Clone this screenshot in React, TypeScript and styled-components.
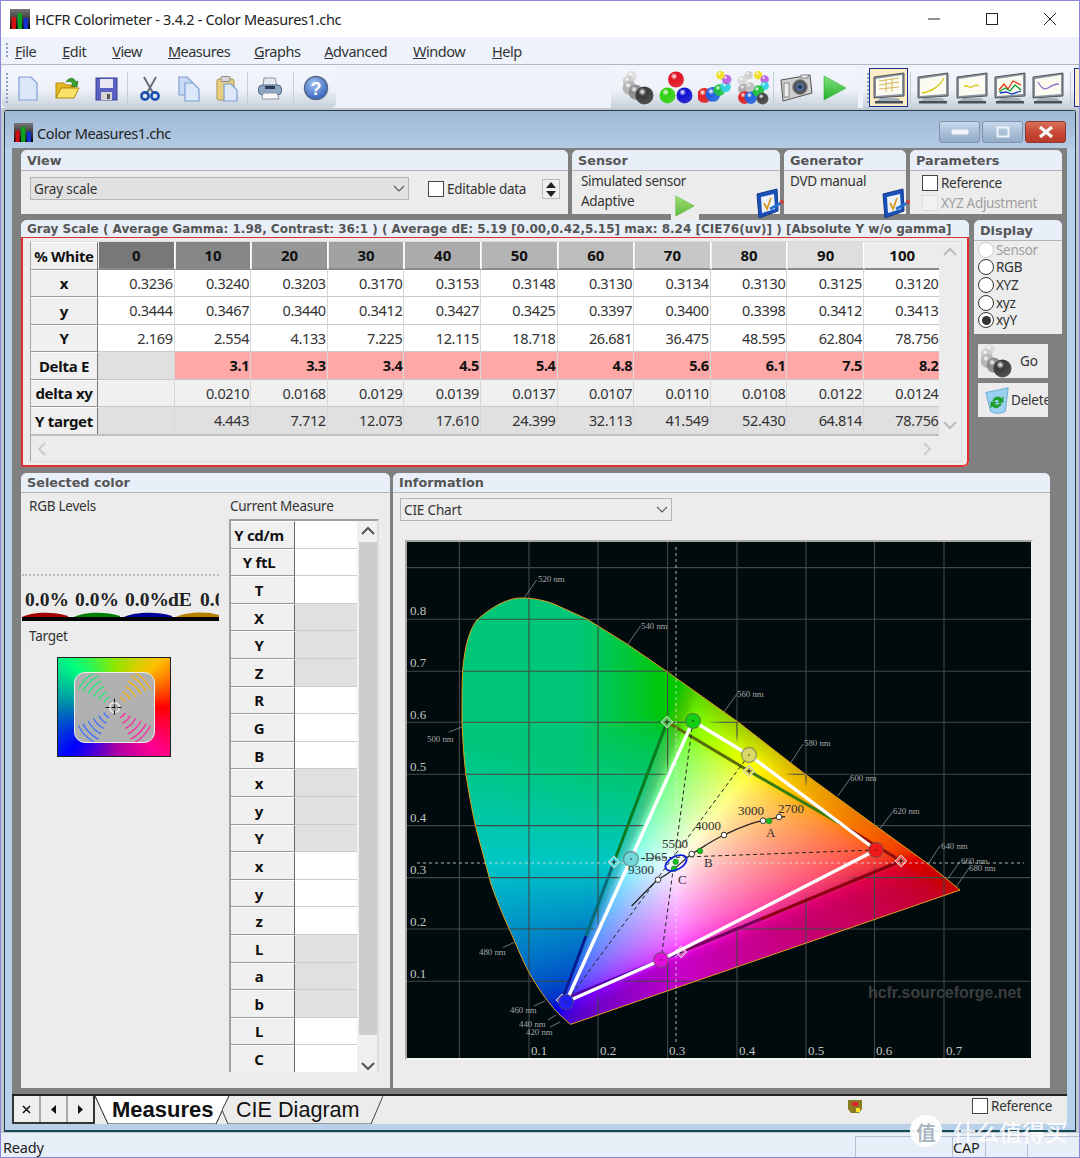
import React from 'react';
import styled, { createGlobalStyle } from 'styled-components';

const UI = `"Noto Sans", "Open Sans", sans-serif`;
const VERD = `"DejaVu Sans", sans-serif`;

const Global = createGlobalStyle`
  html, body { margin: 0; padding: 0; background: #b9d1ea; }
  * { box-sizing: border-box; }
  svg { flex: none; }
`;

const Page = styled.div`
  position: relative; width: 1080px; height: 1158px; overflow: hidden;
  display: flex; flex-direction: column; font-family: ${UI}; color: #222;
  background: #e9eff8; border-left: 1px solid #8a88d8; border-right: 1px solid #8a88d8;
`;
const TitleBar = styled.div`
  height: 37px; flex: none; background: #fff; border-top: 1px solid #8a88d8;
  display: flex; align-items: center; padding-left: 9px; font-size: 14.5px; color: #222;
`;
const TitleText = styled.span`margin-left: 5px; flex: 1; letter-spacing: -0.3px;`;
const WinBtn = styled.div`width: 58px; height: 36px; display: flex; align-items: center; justify-content: center;`;
const MenuBar = styled.div`
  height: 28px; flex: none; background: #eef3fb; border-bottom: 1px solid #b4b8c0;
  display: flex; align-items: center; padding-left: 5px; font-size: 14.5px; color: #333;
`;
const Grip = styled.div`
  width: 2px; height: ${(p: { $h: number }) => p.$h}px; flex: none;
  background-image: linear-gradient(#8fa3c4 50%, transparent 50%); background-size: 2px 4px;
`;
const MenuItem = styled.span`margin-left: ${(p: { $ml: number }) => p.$ml}px; letter-spacing: -0.5px;`;
const ToolBand = styled.div`
  height: 43px; flex: none; display: flex; background: #eef3fb; padding-top: 2px; overflow: hidden;
`;
const ToolBar = styled.div<{ $ml?: number; $w: number; $round?: boolean }>`
  margin-left: ${(p) => p.$ml ?? 0}px; width: ${(p) => p.$w}px; flex: none; height: 41px;
  display: flex; align-items: center; padding-left: 4px;
  background: linear-gradient(#f2f5fb 0%, #eef2f8 55%, #c7d0db 100%);
  border-radius: 3px 3px ${(p) => (p.$round ? '5px 5px' : '0 0')};
`;
const ToolBtn = styled.div<{ $active?: boolean; $w?: number }>`
  width: ${(p) => p.$w ?? 39}px; height: 39px; flex: none; display: flex; align-items: center; justify-content: center;
  ${(p) => p.$active && 'background: #fdeec8; border: 1px solid #1c2a8a;'}
`;
const ToolSep = styled.div<{ $w?: number }>`
  width: ${(p) => p.$w ?? 5}px; height: 32px; flex: none; display: flex; justify-content: center;
  &::after { content: ''; width: 1px; background: #c4ccd8; }
`;
const Mdi = styled.div`
  flex: 1; min-height: 0; background: #c2c8d2; padding: 2px 3px 1px 3px; display: flex;
`;
const Child = styled.div`
  flex: 1; min-width: 0; display: flex; flex-direction: column; background: #b8d0ea;
  border: 1px solid #23384a; border-bottom: 2px solid #154a55; border-radius: 3px 3px 0 0;
`;
const ChildTitle = styled.div`
  height: 37px; flex: none; display: flex; align-items: center; padding: 6px 9px 0 9px; font-size: 14.5px; color: #222;
  background: linear-gradient(#9fb8d4, #b4cbe3);
`;
const ChildName = styled.span`margin-left: 4px; flex: 1; letter-spacing: -0.4px;`;
const CapBtn = styled.div<{ $red?: boolean }>`
  width: 41px; height: 22px; margin-left: 2px; margin-bottom: 1px; border: 1px solid ${(p) => (p.$red ? '#8a3a30' : '#7f94ac')}; border-radius: 3px;
  background: ${(p) => (p.$red ? 'linear-gradient(#d8705c 0%, #c84a36 50%, #b83a28 100%)' : 'linear-gradient(#c8d9ec 0%, #a9c0d8 50%, #94adc8 100%)')};
  display: flex; align-items: center; justify-content: center;
`;
const ChildInner = styled.div`flex: 1; min-height: 0; padding: 0 8px 5px 7px; display: flex; flex-direction: column;`;
const Body = styled.div`
  height: 946px; flex: none; background: #808080; padding: 2px 5px 0 9px; display: flex; flex-direction: column;
`;
const Row = styled.div<{ $h: number; $gap: number; $mt?: number }>`
  height: ${(p) => p.$h}px; flex: none; display: flex; gap: ${(p) => p.$gap}px; margin-top: ${(p) => p.$mt ?? 0}px;
`;
const Panel = styled.div<{ $w: number }>`
  position: relative; width: ${(p) => p.$w}px; flex: none; display: flex; flex-direction: column;
  background: #ececec; border-radius: 6px 6px 0 0;
`;
const PanelHead = styled.div<{ $h?: number }>`
  height: ${(p) => p.$h ?? 21}px; flex: none; background: #e9eff8; border-bottom: 1px solid #b4b4b4; border-radius: 6px 6px 0 0;
  font: bold 12.8px ${VERD}; color: #555; padding-left: 6px; display: flex; align-items: center;
`;
const ViewBody = styled.div`flex: 1; display: flex; align-items: flex-start; padding: 6px 0 0 9px;`;
const Combo = styled.div<{ $w: number }>`
  width: ${(p) => p.$w}px; height: 23px; flex: none; background: #e1e1e1; border: 1px solid #b4b4b4;
  display: flex; align-items: center; justify-content: space-between; padding: 0 3px 0 3px; font-size: 13.5px; color: #333; letter-spacing: -0.15px;
`;
const WhiteCombo = styled(Combo)`background: #ececec; margin: 5px 0 0 7px;`;
const Check = styled.div<{ $off?: boolean }>`
  width: 16px; height: 16px; flex: none; background: ${(p) => (p.$off ? '#f2f2f2' : '#fff')};
  border: 1px solid ${(p) => (p.$off ? '#ddd' : '#444')}; 
`;
const CheckRow = styled.div<{ $ml?: number; $mt?: number; $off?: boolean }>`
  display: flex; align-items: center; gap: 3px; margin-left: ${(p) => p.$ml ?? 0}px; margin-top: ${(p) => p.$mt ?? 0}px;
  font-size: 13.5px; letter-spacing: -0.3px; color: ${(p) => (p.$off ? '#a0a0a0' : '#333')}; height: 20px; white-space: nowrap;
`;
const Spin = styled.div`
  width: 18px; height: 20px; margin: 2px 0 0 16px; border: 1px solid #bbb; background: #efefef; display: flex; flex-direction: column;
  align-items: center; justify-content: space-around;
`;
const SensorBody = styled.div`flex: 1; padding: 0 0 0 9px; font-size: 13.5px; letter-spacing: -0.3px; color: #333; line-height: 20px;`;
const GenBody = styled(SensorBody)`padding-left: 6px;`;
const ParamBody = styled.div`flex: 1; padding: 2px 0 0 12px;`;
const OverIcon = styled.div<{ $r: number; $b: number; $bg?: boolean }>`
  position: absolute; z-index: 2; right: ${(p) => p.$r}px; bottom: ${(p) => p.$b}px; display: flex;
  ${(p) => p.$bg && 'background:#ececec; padding: 0 3px 3px;'}
`;
const GridPanel = styled(Panel)`border-radius: 6px 6px 6px 0;`;
const GridHead = styled(PanelHead)`
  height: 17px; border-bottom: none; font-size: 12.02px; white-space: nowrap; overflow: hidden;
`;
const GridBody = styled.div`
  flex: 1; min-height: 0; border: 1px solid #dd3030; border-width: 1px 2px 2px 2px; border-radius: 0 0 6px 0; background: #ececec;
  padding: 3px 5px 3px 7px; display: flex;
`;
const GridFrame = styled.div`
  flex: 1; border: 1px solid #dcdcdc; border-left-color: #a8a8a8; display: grid; grid-template-columns: 1fr 22px; grid-template-rows: 194px 1fr;
`;
const Table = styled.div`
  display: grid; grid-template-columns: 67px repeat(11, 76.6px); grid-auto-rows: 27.5px;
  border-bottom: 2px solid #c0c0c0; overflow: hidden;
`;
const RowHead = styled.div`
  background: #f0f0f0; border-right: 1px solid #777; border-bottom: 1px solid #999; border-top: 1px solid #fff;
  font-weight: 700; font-size: 15px; color: #111; display: flex; align-items: center; justify-content: center; letter-spacing: -0.3px;
`;
const ColHead = styled.div<{ $bg: string }>`
  background: ${(p) => p.$bg}; border-right: 1px solid #fff; border-bottom: 2px solid #8a8a8a; border-left: 1px solid #eee;
  font-weight: 700; font-size: 15px; color: #111; display: flex; align-items: center; justify-content: center;
`;
const Cell = styled.div<{ $bg: string; $bold?: boolean }>`
  background: ${(p) => p.$bg}; border-right: 1px solid #d8d8d8; border-bottom: 1px solid #c8c8c8;
  font-size: 14.5px; letter-spacing: -0.35px; color: ${(p) => (p.$bold ? '#111' : '#333')}; font-weight: ${(p) => (p.$bold ? 700 : 400)};
  display: flex; align-items: center; justify-content: flex-end; padding-right: 1px;
`;
const VTrack = styled.div`display: flex; flex-direction: column; justify-content: space-between; align-items: center; padding: 4px 0;`;
const HTrack = styled.div`display: flex; justify-content: space-between; align-items: center; padding: 0 4px;`;
const Side = styled.div`width: 88px; flex: none; display: flex; flex-direction: column;`;
const DisplayPanel = styled(Panel)`height: 114px; width: 88px;`;
const RadioList = styled.div`padding: 0 0 0 4px; display: flex; flex-direction: column;`;
const RadioRow = styled.div<{ $off?: boolean }>`
  height: 17.6px; display: flex; align-items: center; font-size: 13.5px; letter-spacing: -0.3px; color: ${(p) => (p.$off ? '#a0a0a0' : '#333')};
`;
const Radio = styled.div<{ $off?: boolean; $on?: boolean }>`
  width: 16px; height: 16px; border-radius: 50%; background: #fff; flex: none; margin-right: 2px;
  border: 1px solid ${(p) => (p.$off ? '#ccc' : '#333')}; display: flex; align-items: center; justify-content: center;
  ${(p) => p.$on && '&::after{content:"";width:9px;height:9px;border-radius:50%;background:#333;}'}
`;
const SideBtn = styled.div<{ $mt: number; $pl?: number }>`
  width: 70px; height: 34px; margin: ${(p) => p.$mt}px 0 0 4px; padding-left: ${(p) => p.$pl ?? 0}px; background: #ececec; display: flex; align-items: center; font-size: 13.5px; color: #333; overflow: hidden; flex: none; white-space: nowrap; letter-spacing: -0.2px;
`;
const GoLabel = styled.span`margin-left: 8px;`;
const SelBody = styled.div`flex: 1; min-height: 0; display: grid; grid-template-columns: 208px 1fr;`;
const LeftCol = styled.div`display: flex; flex-direction: column;`;
const Caption = styled.div<{ $ml: number; $mt?: number; $h?: number }>`
  margin: ${(p) => p.$mt ?? 0}px 0 0 ${(p) => p.$ml}px; font-size: 13.5px; letter-spacing: -0.25px; color: #333; height: ${(p) => p.$h ?? 20}px; line-height: 20px; flex: none;
`;
const Dotted = styled.div`height: 0; width: 197px; margin: 58px 0 0 1px; border-top: 2px dotted #bbb;`;
const Levels = styled.div`
  width: 197px; height: 22px; margin: 13px 0 0 1px; overflow: hidden; display: flex; align-items: baseline;
  font: bold 19.5px "Liberation Serif", serif; color: #222; white-space: nowrap; padding-left: 3px; flex: none;
`;
const Lvl = styled.span<{ $w: number }>`width: ${(p) => p.$w}px; flex: none;`;
const Domes = styled.svg`display: block; margin-left: 1px; flex: none;`;
const Swatch = styled.div`
  width: 114px; height: 100px; margin: 11px 0 0 36px; border: 1px solid #222; flex: none;
  display: flex; align-items: center; justify-content: center;
  background: conic-gradient(#8ae800 0deg, #ffc000 45deg, #ff0000 90deg, #ff0090 135deg, #a000a8 180deg, #0000ff 225deg, #0080b0 270deg, #00ff80 315deg, #8ae800 360deg);
`;
const SwatchInner = styled.div`
  width: 81px; height: 71px; border-radius: 11px; border: 1px solid #eee; background: #b0b0b0; display: flex;
`;
const RightCol = styled.div`display: flex; flex-direction: column;`;
const MeasureFrame = styled.div`
  width: 150px; height: 553px; border: 2px solid #a0a0a0; border-right-color: #ddd; border-bottom: none; display: grid; grid-template-columns: 126px 22px; overflow: hidden; flex: none;
`;
const MeasureTable = styled.div`display: grid; grid-template-columns: 64px 62px; grid-auto-rows: 27.6px;`;
const MHead = styled(RowHead)`border-right: 1px solid #666; font-size: 15px; padding-right: 7px;`;
const MCell = styled.div<{ $g: boolean }>`background: ${(p) => (p.$g ? '#e0e0e0' : '#fff')}; border-bottom: 1px solid #ccc;`;
const MScroll = styled.div`background: #f0f0f0; display: flex; flex-direction: column; align-items: center;`;
const MArrow = styled.div`height: 21px; display: flex; align-items: center; justify-content: center; flex: none;`;
const MThumb = styled.div`flex: 1; width: 19px; background: #cdcdcd; margin-bottom: 24px;`;
const InfoBody = styled.div`flex: 1; display: flex; flex-direction: column;`;
const ChartFrame = styled.div`
  width: 628px; height: 520px; margin: 19px 0 0 12px; border: 2px solid #a8a8a8; border-right-color: #eee; border-bottom-color: #f4f4f4; flex: none;
`;
const ChartSvg = styled.svg`display: block;`;
const TabStrip = styled.div`
  height: 30px; flex: none; background: #ececec; border-top: 2px solid #222; display: flex; position: relative;
`;
const NavGroup = styled.div`display: flex; height: 28px; border: 2px solid #333; border-top: none; width: 83px; flex: none;`;
const NavBtn = styled.div`flex: 1; background: #efefef; border-right: 2px solid #aaa; display: flex; align-items: center; justify-content: center; &:last-child{border-right:none;}`;
const Tab = styled.div<{ $w: number; $ml: number; $active?: boolean }>`
  position: relative; width: ${(p) => p.$w}px; margin-left: ${(p) => p.$ml}px; height: 28px; flex: none; display: flex; align-items: center;
  font: ${(p) => (p.$active ? 'bold 22px' : '21.6px')} "Liberation Sans", sans-serif; color: #111;
`;
const TabShape = styled.svg`position: absolute; left: 0; top: 0;`;
const TabLabel = styled.span<{ $pl: number }>`position: relative; padding-left: ${(p) => p.$pl}px; margin-top: -1px;`;
const TabRight = styled.div`margin-left: auto; display: flex; align-items: center; height: 20px; padding-right: 15px;`;
const TabRef = styled(CheckRow)`margin-left: 110px;`;
const StatusBar = styled.div`
  flex: none; height: 25px; background: #e8eef8; display: flex; align-items: flex-end; font-size: 14.5px; color: #222; letter-spacing: -0.2px; border-bottom: 1px solid #8a88d8; overflow: hidden;
`;
const Ready = styled.span`padding-left: 2px; flex: 1; line-height: 20px;`;
const Pane = styled.div<{ $w: number }>`
  width: ${(p) => p.$w}px; height: 21px; border-left: 1px solid #b4c0d4; border-top: 1px solid #b4c0d4; flex: none; line-height: 20px; padding-left: 0; font-size: 14.5px;
`;
const Mark = styled.div`
  position: absolute; left: 909px; top: 1114px; display: flex; align-items: center; gap: 11px; color: rgba(255,255,255,.88);
`;
const MarkDot = styled.div`
  width: 32px; height: 32px; border-radius: 50%; background: rgba(255,255,255,.92); color: #a8b4c0; font: 700 19px "Noto Sans CJK SC", sans-serif; display: flex; align-items: center; justify-content: center;
`;
const MarkText = styled.div`font: 500 23px "Noto Sans CJK SC", sans-serif; white-space: nowrap;`;

/* ---------- icons ---------- */
const AppIcon = ({ s = 20 }: { s?: number }) => (
  <svg width={s} height={s} viewBox="0 0 20 20">
    <defs><linearGradient id="appbg" x1="0" x2="0" y1="0" y2="1"><stop offset="0" stopColor="#777" /><stop offset="1" stopColor="#000" /></linearGradient></defs>
    <rect width="20" height="20" fill="url(#appbg)" />
    <rect x="1.5" y="8" width="4.5" height="12" fill="#d01010" /><rect x="7.5" y="4" width="4.5" height="16" fill="#10a020" /><rect x="13.5" y="9" width="4.5" height="11" fill="#1030d0" />
  </svg>
);
const Ic = ({ children, s = 28 }: { children: React.ReactNode; s?: number }) => <svg width={s} height={s} viewBox="0 0 28 28">{children}</svg>;
const Page1 = ({ x, y, w, h, f = '#dce8fa' }: { x: number; y: number; w: number; h: number; f?: string }) => (
  <path d={`M${x} ${y}h${w - 6}l6 6v${h - 6}h${-w}z`} fill={f} stroke="#7f9fd4" strokeWidth="1.2" />
);
const NewIc = () => <Ic><Page1 x={5} y={3} w={18} h={23} /></Ic>;
const OpenIc = () => (
  <Ic>
    <path d="M3 9h8l2 2h8v3H8L3 24z" fill="#e8b820" stroke="#b08a10" />
    <path d="M8 14h18l-5 10H3z" fill="#fbe168" stroke="#b08a10" />
    <path d="M13 8c3-5 8-5 10 0l2-1-1 6-6-1 2-2c-2-3-4-3-7-2z" fill="#3aa030" stroke="#1e6a1e" strokeWidth=".6" />
  </Ic>
);
const SaveIc = () => (
  <Ic>
    <rect x="4" y="4" width="21" height="22" fill="#5a60c4" stroke="#3a3f90" />
    <rect x="8" y="5" width="13" height="9" fill="#e8e8f4" /><rect x="9" y="18" width="11" height="8" fill="#d4d4d4" /><rect x="15" y="20" width="3" height="5" fill="#555" />
  </Ic>
);
const CutIc = () => (
  <Ic>
    <path d="M8 3l9 16M20 3l-9 16" stroke="#68707c" strokeWidth="2" fill="none" />
    <circle cx="9" cy="22" r="3.6" fill="none" stroke="#1e50b0" strokeWidth="2.6" /><circle cx="19" cy="22" r="3.6" fill="none" stroke="#1e50b0" strokeWidth="2.6" />
  </Ic>
);
const CopyIc = () => <Ic><Page1 x={5} y={3} w={14} h={18} f="#c8daf4" /><Page1 x={11} y={9} w={14} h={18} /></Ic>;
const PasteIc = () => (
  <Ic>
    <rect x="5" y="5" width="17" height="21" rx="2" fill="#e8cf80" stroke="#a8914a" />
    <rect x="9" y="2.5" width="9" height="5" rx="1" fill="#d8d8d8" stroke="#888" />
    <Page1 x={12} y={10} w={13} h={17} />
  </Ic>
);
const PrintIc = () => (
  <Ic>
    <path d="M8 4h11l2 8H7z" fill="#e4e8f0" stroke="#8a94a4" />
    <rect x="2.5" y="11" width="23" height="10" rx="4" fill="#8ea6c4" stroke="#54688a" />
    <rect x="9" y="12" width="10" height="3" fill="#2a3a50" />
    <path d="M7 19h14l2 6H6z" fill="#fafafa" stroke="#8a94a4" />
  </Ic>
);
const HelpIc = () => (
  <Ic>
    <defs><radialGradient id="hlp" cx=".4" cy=".3" r=".8"><stop offset="0" stopColor="#9ec0f0" /><stop offset="1" stopColor="#2a5ab8" /></radialGradient></defs>
    <circle cx="14" cy="14" r="11.5" fill="url(#hlp)" stroke="#5a6a8a" strokeWidth="1.5" />
    <text x="14" y="20.5" textAnchor="middle" fontFamily="Liberation Sans" fontWeight="700" fontSize="18" fill="#fff">?</text>
  </Ic>
);
type B = [number, number, number, string];
const Balls = ({ list, s = 34 }: { list: B[]; s?: number }) => (
  <svg width={s} height={s} viewBox="0 0 32 32">
    <defs>
      {[...new Set(list.map((b) => b[3]))].map((c) => (
        <radialGradient key={c} id={`ball${c.slice(1)}`} cx=".38" cy=".3" r=".75">
          <stop offset="0" stopColor="#fff" /><stop offset=".3" stopColor={c} /><stop offset="1" stopColor={c} stopOpacity=".85" />
        </radialGradient>
      ))}
    </defs>
    {list.map((b, i) => <circle key={i} cx={b[0]} cy={b[1]} r={b[2]} fill={`url(#ball${b[3].slice(1)})`} />)}
  </svg>
);
const SMOKE: B[] = [[11, 5, 5, '#dddddd'], [8, 10, 5.5, '#cccccc'], [9, 16, 6.5, '#b4b4b4'], [15, 20, 7, '#8a8a8a'], [23, 23, 8.5, '#3a3a3a']];
const RGB: B[] = [[16, 8, 7.5, '#e01020'], [8, 23, 7.5, '#30d010'], [24, 23, 7.5, '#1010d0']];
const MIX: B[] = [[6, 23, 7, '#e02020'], [14, 22, 7, '#2060e0'], [20, 18, 5.5, '#20c040'], [26, 15, 5, '#30d0e0'], [27, 8, 4.5, '#c060e0'], [21, 4, 4, '#f0e020']];
const ALL: B[] = [[6, 9, 4.5, '#d8d8d8'], [12, 4, 4, '#cccccc'], [21, 4, 4, '#f0e020'], [27, 8, 4, '#c060e0'], [27, 14, 4, '#30d0e0'], [7, 17, 5, '#aaaaaa'], [8, 25, 6, '#e02020'], [14, 25, 6, '#2060e0'], [21, 19, 5.5, '#20c040'], [25, 26, 5.5, '#444444'], [13, 15, 4.5, '#c0c0c0']];
const CamIc = () => (
  <svg width="34" height="30" viewBox="0 0 34 30">
    <path d="M2 7l29-5 2 18-29 8z" fill="#cfcfcf" stroke="#555" />
    <rect x="5" y="10" width="5" height="14" fill="#eee" stroke="#888" />
    <circle cx="21" cy="14" r="7.5" fill="#555" stroke="#999" /><circle cx="21" cy="14" r="4" fill="#4a6a9a" /><circle cx="21" cy="14" r="1.6" fill="#123" />
    <rect x="22" y="2" width="7" height="3" fill="#eee" stroke="#888" />
  </svg>
);
const PlayIc = ({ s = 26, c1 = '#7fe27f', c2 = '#28b02c' }: { s?: number; c1?: string; c2?: string }) => (
  <svg width={s} height={s} viewBox="0 0 26 26">
    <defs><linearGradient id={`pl${s}`} x1="0" x2="0" y1="0" y2="1"><stop offset="0" stopColor={c1} /><stop offset="1" stopColor={c2} /></linearGradient></defs>
    <path d="M2 1l22 12L2 25z" fill={`url(#pl${s})`} stroke={c2} strokeWidth=".6" />
  </svg>
);
const Monitor = ({ children }: { children?: React.ReactNode }) => (
  <svg width="34" height="34" viewBox="0 0 34 34">
    <path d="M2 6l30-4v23l-30 2z" fill="#8894a0" stroke="#555" />
    <path d="M4 8l26-4v19l-26 2z" fill="#fbfbf2" />
    {children}
    <path d="M8 27h18l3 3H5z" fill="#a4b0bc" /><rect x="3" y="30" width="28" height="2.5" fill="#4a5058" />
  </svg>
);
const CheckIc = () => (
  <svg width="30" height="30" viewBox="0 0 30 30">
    <path d="M2 6l20-5 1 22L4 30z" fill="#1a50b8" stroke="#123a88" />
    <path d="M6 9l13-3 1 15L7 25z" fill="#eef2fa" />
    <path d="M9 15l3 6 4-11" stroke="#d89a20" strokeWidth="1.8" fill="none" />
    <path d="M15 21l11-6" stroke="#2a70d0" strokeWidth="3" /><circle cx="27" cy="14" r="2" fill="#d04030" />
  </svg>
);
const Arrow = ({ d, c = '#bbb' }: { d: 'u' | 'd' | 'l' | 'r'; c?: string }) => {
  const p = { u: 'M2 9l6-6 6 6', d: 'M2 4l6 6 6-6', l: 'M10 1l-6 6 6 6', r: 'M5 1l6 6-6 6' }[d];
  return <svg width="16" height="14" viewBox="0 0 16 14"><path d={p} fill="none" stroke={c} strokeWidth="2" /></svg>;
};
const Tri = ({ up }: { up?: boolean }) => <svg width="10" height="6" viewBox="0 0 10 6"><path d={up ? 'M5 0l5 6H0z' : 'M0 0h10L5 6z'} fill="#222" /></svg>;
const Chev = () => <svg width="12" height="8" viewBox="0 0 12 8"><path d="M1 1l5 5 5-5" fill="none" stroke="#555" strokeWidth="1.1" /></svg>;
const TrashIc = () => (
  <svg width="28" height="32" viewBox="0 0 30 32">
    <path d="M3 8l24-5 -3 25c-5 3-12 3-16 0z" fill="#9cd0f0" stroke="#6aa8d0" />
    <path d="M10 17a6 6 0 0 1 10-3l2-2v7h-7l2-2a3 3 0 0 0-5 1zM20 20a6 6 0 0 1-10 3l-2 2v-7h7l-2 2a3 3 0 0 0 5-1z" fill="#1fa030" />
  </svg>
);

/* ---------- data ---------- */
const HEAD: [string, string][] = [['0', '#787878'], ['10', '#868686'], ['20', '#969696'], ['30', '#a2a2a2'], ['40', '#ababab'], ['50', '#b4b4b4'], ['60', '#bdbdbd'], ['70', '#c7c7c7'], ['80', '#d1d1d1'], ['90', '#dedede'], ['100', '#ececec']];
const ROWS: { name: string; bg: string; first?: string; bold?: boolean; vals: string[] }[] = [
  { name: 'x', bg: '#fff', vals: ['0.3236', '0.3240', '0.3203', '0.3170', '0.3153', '0.3148', '0.3130', '0.3134', '0.3130', '0.3125', '0.3120'] },
  { name: 'y', bg: '#fff', vals: ['0.3444', '0.3467', '0.3440', '0.3412', '0.3427', '0.3425', '0.3397', '0.3400', '0.3398', '0.3412', '0.3413'] },
  { name: 'Y', bg: '#fff', vals: ['2.169', '2.554', '4.133', '7.225', '12.115', '18.718', '26.681', '36.475', '48.595', '62.804', '78.756'] },
  { name: 'Delta E', bg: '#ffa8a8', first: '#e0e0e0', bold: true, vals: ['', '3.1', '3.3', '3.4', '4.5', '5.4', '4.8', '5.6', '6.1', '7.5', '8.2'] },
  { name: 'delta xy', bg: '#f0f0f0', vals: ['', '0.0210', '0.0168', '0.0129', '0.0139', '0.0137', '0.0107', '0.0110', '0.0108', '0.0122', '0.0124'] },
  { name: 'Y target', bg: '#e0e0e0', vals: ['', '4.443', '7.712', '12.073', '17.610', '24.399', '32.113', '41.549', '52.430', '64.814', '78.756'] },
];
const MEASURE: [string, boolean][] = [['Y cd/m', false], ['Y ftL', false], ['T', false], ['X', true], ['Y', true], ['Z', true], ['R', false], ['G', false], ['B', false], ['x', true], ['y', true], ['Y', true], ['x', false], ['y', false], ['z', false], ['L', true], ['a', true], ['b', true], ['L', false], ['C', false]];
const MENU: [string, string, number][] = [['F', 'ile', 7], ['E', 'dit', 26], ['V', 'iew', 26], ['M', 'easures', 26], ['G', 'raphs', 24], ['A', 'dvanced', 24], ['W', 'indow', 26], ['H', 'elp', 27]];

/* ---------- arcs inside the target swatch ---------- */
const arcs = () => {
  const cx = 40, cy = 35;
  const Q: [number, string][] = [[225, '#20e878'], [315, '#f8b810'], [135, '#3870ff'], [45, '#ff20a0']];
  const out: React.ReactNode[] = [];
  Q.forEach(([a, c]) => {
    [12, 18, 24, 30, 36, 41].forEach((r, i) => {
      const s = ((a - 18) * Math.PI) / 180, e = ((a + 18) * Math.PI) / 180;
      out.push(<path key={`${a}${i}`} fill="none" stroke={c} strokeWidth="1.2" d={`M${cx + r * Math.cos(s)} ${cy + r * Math.sin(s)}A${r} ${r} 0 0 1 ${cx + r * Math.cos(e)} ${cy + r * Math.sin(e)}`} />);
    });
  });
  return out;
};

/* ---------- CIE chart ---------- */
const LOCUS = 'M522.4 599C512 599 497 604 478 621C471 630 467 644 465 660C463 672 463 690 463 723C464 745 465 760 467 776C471 800 474 817 478 833C484 855 488 870 492 885C500 908 508 925 516 943C524 962 530 975 537 985C545 998 553 1008 561 1016L571.4 1025.4L961 891L930.6 866L875.5 826L806 775L739 723L668.6 673L628.6 645.4L587.8 620L555 605C545 601 532 599 522.4 599Z';
const G = [694, 722], R = [877, 851], Bl = [567, 1003], Yp = [750, 756], Cp = [632, 860], Mp = [662, 961];
const VX = [460.4, 530, 599, 668.6, 738, 807, 875.5, 945];
const HY = [568.6, 620.2, 672.3, 723.2, 775.3, 826.6, 878.6, 930, 982.3];

const toXY = (p: number[]) => [0.1 + (p[0] - 530) / 692, 0.1 + (982.3 - p[1]) / 515];
const inv3 = (m: number[][]) => {
  const [[a, b, c], [d, e, f], [g, h, i]] = m;
  const A = e * i - f * h, B = f * g - d * i, C = d * h - e * g;
  const det = a * A + b * B + c * C;
  return [[A, c * h - b * i, b * f - c * e], [B, a * i - c * g, c * d - a * f], [C, b * g - a * h, a * e - b * d]].map((r) => r.map((v) => v / det));
};
const mul = (m: number[][], v: number[]) => m.map((r) => r[0] * v[0] + r[1] * v[1] + r[2] * v[2]);
const rgbMatrix = (pr: number[][]) => {
  const P = [[pr[0][0], pr[1][0], pr[2][0]], [pr[0][1], pr[1][1], pr[2][1]], [1 - pr[0][0] - pr[0][1], 1 - pr[1][0] - pr[1][1], 1 - pr[2][0] - pr[2][1]]];
  const wx = 0.3127, wy = 0.329;
  const S = mul(inv3(P), [wx / wy, 1, (1 - wx - wy) / wy]);
  return inv3(P.map((r) => r.map((v, i) => v * S[i])));
};
type Tile = { x: number; y: number; fill: string; inside: boolean };
const CELL = 4;
const buildField = (): Tile[] => {
  const display = rgbMatrix([toXY(R), toXY(G), toXY(Bl)]);
  const rec709 = rgbMatrix([[0.64, 0.33], [0.3, 0.6], [0.15, 0.06]]);
  const out: Tile[] = [];
  for (let py = 592; py < 1034; py += CELL) {
    for (let px = 456; px < 970; px += CELL) {
      const [x, y] = toXY([px + CELL / 2, py + CELL / 2]);
      const xyz = [x / y, 1, (1 - x - y) / y];
      const d = mul(display, xyz);
      const dmx = Math.max(d[0], d[1], d[2]);
      const mn = Math.min(d[0], d[1], d[2]) / dmx;
      const t = Math.min(1, Math.max(0, -mn / 0.1));
      const dim = 1 - 0.22 * t;
      const v = mul(rec709, xyz).map((c) => Math.max(0, c));
      const mx = Math.max(v[0], v[1], v[2]);
      const col = v.map((c) => Math.round(255 * dim * Math.pow(c / mx, 1 / 2.4)));
      /* the far green side of the reference chart keeps a teal tint */
      const tint = 0.6 * Math.min(1, Math.max(0, (668 - px) / 90));
      col[2] = Math.max(col[2], Math.round(col[1] * tint));
      out.push({ x: px, y: py, fill: `rgb(${col[0]},${col[1]},${col[2]})`, inside: mn > -0.035 });
    }
  }
  return out;
};
const FIELD = buildField();

const NM: [string, number, number, number, number, number, number][] = [
  ['520 nm', 539, 583, 525.3, 599, 537.6, 581], ['540 nm', 642, 630, 628.6, 645.4, 641.6, 627], ['560 nm', 738, 698, 724.5, 713.6, 738, 695],
  ['580 nm', 805, 747, 791.8, 763.6, 804, 745], ['600 nm', 851, 782, 838.8, 797, 851, 779.7], ['620 nm', 894, 815, 880.8, 829.7, 893.9, 812.5],
  ['640 nm', 942, 850, 928.6, 866, 940.8, 847], ['660 nm', 962, 865, 949, 879.6, 961, 862.4], ['680 nm', 970, 872, 957, 888, 970, 869],
  ['500 nm', 428, 743, 449.8, 733, 463, 728], ['480 nm', 480, 956, 504, 948.5, 516, 943], ['460 nm', 511, 1014, 534.7, 1007, 546, 1002],
  ['440 nm', 520, 1028, 549, 1021, 557, 1016], ['420 nm', 527, 1036, 551, 1028, 561, 1023],
];
const Temp = styled.text`font: 13px "Liberation Serif", serif; fill: #303030;`;
const Axis = styled.text`font: 13px "Liberation Serif", serif; fill: #c0c4c4;`;
const Nm = styled.text`font: 8.8px "Liberation Serif", serif; fill: #a4a8a8;`;

const Diamond = ({ x, y, f }: { x: number; y: number; f: string }) => (
  <g>
    <path d={`M${x} ${y - 6}l6 6-6 6-6-6z`} fill={f} stroke="#d0d0d0" strokeWidth="1" />
    <path d={`M${x - 2.5} ${y}h5M${x} ${y - 2.5}v5`} stroke="#111" strokeWidth="1" />
  </g>
);
const Dot = ({ x, y, f }: { x: number; y: number; f: string }) => (
  <g>
    <circle cx={x} cy={y} r="7.5" fill={f} stroke="#555" strokeOpacity=".5" strokeWidth="1.4" />
    <circle cx={x} cy={y} r=".8" fill="#222" />
  </g>
);
const Tiles = ({ only }: { only: boolean }) => (
  <g clipPath="url(#locus)">
    <g filter="url(#soft)" shapeRendering="crispEdges">
      {FIELD.filter((t) => !only || t.inside).map((t) => <rect key={`${t.x}-${t.y}`} x={t.x} y={t.y} width={CELL + 1} height={CELL + 1} fill={t.fill} />)}
    </g>
  </g>
);
const Chart = () => (
  <ChartSvg width="624" height="516" viewBox="408 543 624 516">
    <defs>
      <clipPath id="locus"><path d={LOCUS} /></clipPath>
      <filter id="soft" filterUnits="userSpaceOnUse" x="440" y="580" width="540" height="470"><feGaussianBlur stdDeviation="2" /></filter>
    </defs>
    <rect x="408" y="543" width="624" height="516" fill="#010a0c" />
    <Tiles only={false} />
    {VX.map((x) => <line key={x} x1={x} x2={x} y1="543" y2="1059" stroke="#404848" strokeWidth="1.1" />)}
    {HY.map((y) => <line key={y} x1="408" x2="1032" y1={y} y2={y} stroke="#404848" strokeWidth="1.1" />)}
    <Tiles only />
    <path d={LOCUS} fill="none" stroke="#e0a020" strokeWidth="1" />
    {/* reference gamut */}
    <g fill="none" strokeWidth="3">
      <path d="M668 723L615 863" stroke="#0a7a20" />
      <path d="M615 863L587 937" stroke="#0a6a78" />
      <path d="M587 937L563 1001" stroke="#0a1a90" />
      <path d="M668 723L750 772" stroke="#5a6a08" />
      <path d="M750 772L840 824" stroke="#3a7a10" />
      <path d="M840 824L902 862" stroke="#901010" />
      <path d="M902 862L762 920" stroke="#8a0010" />
      <path d="M762 920L682 953" stroke="#7a0060" />
      <path d="M682 953L563 1001" stroke="#5000a8" />
    </g>
    <Diamond x={668} y={723} f="#60d060" /><Diamond x={902} y={862} f="#ff6060" /><Diamond x={750} y={772} f="#e8e060" />
    <Diamond x={615} y={863} f="#50e8e8" /><Diamond x={682} y={953} f="#f070e0" /><Diamond x={563} y={1001} f="#7060e0" />
    {/* crosshair + targets */}
    <g fill="none" stroke="#222" strokeWidth="1" strokeDasharray="4 3">
      <path d={`M${G}L${Mp}`} /><path d={`M${Yp}L${Bl}`} /><path d={`M${R}L${Cp}`} />
    </g>
    <path d="M677 548V1045M418 864H1025" stroke="#e8e8e8" strokeOpacity=".75" strokeWidth="1" strokeDasharray="3 3" fill="none" />
    {/* display gamut */}
    <path d={`M${G}L${Yp}L${R}L${Mp}L${Bl}L${Cp}Z`} fill="none" stroke="#fff" strokeWidth="3.4" strokeLinejoin="round" />
    <Dot x={694} y={722} f="#10d010" /><Dot x={877} y={851} f="#f01818" /><Dot x={567} y={1003} f="#2020f0" />
    <Dot x={750} y={756} f="#d8d868" /><Dot x={632} y={860} f="#70d8d8" /><Dot x={662} y={961} f="#e010d8" />
    {/* Planckian */}
    <path d="M786 817.7C775 818 770 821 764 821.7C750 824 738 830 725 836C712 842 703 849 692.7 855C686 860 680 866 675 870C670 874 665 877 659 880.7C650 888 642 898 632.6 907" fill="none" stroke="#222" strokeWidth="1.2" />
    {[[780, 818], [764, 821.7], [725, 836], [692.7, 855], [659, 880.7]].map(([x, y]) => <circle key={x} cx={x} cy={y} r="2.8" fill="#fff" stroke="#333" strokeWidth="1" />)}
    {[[770, 822], [701, 852], [676.7, 862.7], [675, 869.7]].map(([x, y]) => <circle key={x} cx={x} cy={y} r="2.8" fill="#10c020" stroke="#207020" strokeWidth=".6" />)}
    <ellipse cx="677" cy="864" rx="11.5" ry="6.5" transform="rotate(-28 677 864)" fill="none" stroke="#1020e0" strokeWidth="1.8" />
    <Temp x="779" y="814">2700</Temp><Temp x="739" y="816">3000</Temp><Temp x="696" y="831">4000</Temp><Temp x="663" y="849">5500</Temp>
    <Temp x="646" y="862">D65</Temp><Temp x="629" y="875">9300</Temp><Temp x="767" y="838">A</Temp><Temp x="705" y="868">B</Temp><Temp x="679" y="885">C</Temp>
    {NM.map(([t, x, y, a, b, c, d]) => (
      <g key={t}>
        <line x1={a} y1={b} x2={c} y2={d} stroke="#8a9090" strokeWidth=".8" />
        <Nm x={x} y={y}>{t}</Nm>
      </g>
    ))}
    {[['0.8', 616], ['0.7', 668], ['0.6', 720], ['0.5', 772], ['0.4', 823], ['0.3', 875], ['0.2', 927], ['0.1', 979]].map(([t, y]) => <Axis key={t} x="411" y={y}>{t}</Axis>)}
    {[['0.1', 532], ['0.2', 601], ['0.3', 670], ['0.4', 740], ['0.5', 809], ['0.6', 877], ['0.7', 947]].map(([t, x]) => <Axis key={t} x={x} y="1056">{t}</Axis>)}
    <text x="869" y="999" fontFamily="Liberation Sans" fontWeight="700" fontSize="15.9" fill="#3c3f3f">hcfr.sourceforge.net</text>
  </ChartSvg>
);

export default function App() {
  return (
    <Page>
      <Global />
      <TitleBar>
        <AppIcon />
        <TitleText>HCFR Colorimeter - 3.4.2 - Color Measures1.chc</TitleText>
        <WinBtn><svg width="12" height="2"><rect width="12" height="1" y="0.5" fill="#222" /></svg></WinBtn>
        <WinBtn><svg width="12" height="12"><rect x=".5" y=".5" width="11" height="11" fill="none" stroke="#222" /></svg></WinBtn>
        <WinBtn><svg width="12" height="12"><path d="M0 0l12 12M12 0L0 12" stroke="#222" /></svg></WinBtn>
      </TitleBar>
      <MenuBar>
        <Grip $h={16} />
        {MENU.map(([u, r, ml]) => <MenuItem key={u} $ml={ml}><u>{u}</u>{r}</MenuItem>)}
      </MenuBar>
      <ToolBand>
        <ToolBar $ml={1} $w={334} $round>
          <Grip $h={30} />
          <ToolBtn><NewIc /></ToolBtn><ToolBtn><OpenIc /></ToolBtn><ToolBtn><SaveIc /></ToolBtn><ToolSep />
          <ToolBtn><CutIc /></ToolBtn><ToolBtn $w={38}><CopyIc /></ToolBtn><ToolBtn $w={38}><PasteIc /></ToolBtn><ToolSep />
          <ToolBtn><PrintIc /></ToolBtn><ToolSep $w={8} /><ToolBtn $w={38}><HelpIc /></ToolBtn>
        </ToolBar>
        <ToolBar $ml={275} $w={247}>
          <Grip $h={0} />
          <ToolBtn $w={39}><Balls list={SMOKE} /></ToolBtn><ToolBtn><Balls list={RGB} /></ToolBtn><ToolBtn><Balls list={MIX} /></ToolBtn><ToolBtn $w={37}><Balls list={ALL} /></ToolBtn><ToolSep />
          <ToolBtn><CamIc /></ToolBtn><ToolBtn><PlayIc /></ToolBtn>
        </ToolBar>
        <ToolBar $ml={5} $w={240}>
          <Grip $h={30} />
          <ToolBtn $active>
            <Monitor>
              <path d="M7 10l20-3M7 14l20-3M7 18l20-2M14 8v13M20 7v14" stroke="#d8b860" strokeWidth="1" />
            </Monitor>
          </ToolBtn>
          <ToolSep />
          <ToolBtn $w={39}><Monitor><path d="M6 22C15 21 24 15 28 7" stroke="#d8c810" strokeWidth="1.3" fill="none" /></Monitor></ToolBtn>
          <ToolBtn $w={39}><Monitor><path d="M9 16c3-4 5 2 8 0s5-3 7-1" stroke="#d8c810" strokeWidth="1.3" fill="none" /></Monitor></ToolBtn>
          <ToolBtn $w={38}><Monitor><path d="M6 19l5-6 4 5 5-8 8 4" stroke="#e03010" strokeWidth="1.3" fill="none" /><path d="M6 21l6-4 5 3 5-6 6 5" stroke="#10a030" strokeWidth="1.3" fill="none" /><path d="M7 22l6-1 6 2 9-3" stroke="#1030c0" strokeWidth="1.3" fill="none" /></Monitor></ToolBtn>
          <ToolBtn $w={38}><Monitor><path d="M7 11c4 7 7 8 10 6s6-4 11-4" stroke="#9078c8" strokeWidth="1.3" fill="none" /></Monitor></ToolBtn>
          <ToolSep $w={7} />
          <ToolBtn $active />
        </ToolBar>
      </ToolBand>
      <Mdi>
        <Child>
          <ChildTitle>
            <AppIcon s={19} />
            <ChildName>Color Measures1.chc</ChildName>
            <CapBtn><svg width="18" height="6"><rect width="18" height="6" rx="1" fill="#f0f4f8" stroke="#6a7a8a" strokeWidth=".5" /></svg></CapBtn>
            <CapBtn><svg width="14" height="12"><rect x="1.5" y="1.5" width="11" height="9" fill="none" stroke="#f0f4f8" strokeWidth="2" /></svg></CapBtn>
            <CapBtn $red><svg width="18" height="14"><path d="M3 2l12 10M15 2L3 12" stroke="#f6f6f6" strokeWidth="3.4" /></svg></CapBtn>
          </ChildTitle>
          <ChildInner>
            <Body>
              <Row $h={64} $gap={4}>
                <Panel $w={547}>
                  <PanelHead>View</PanelHead>
                  <ViewBody>
                    <Combo $w={379}>Gray scale<Chev /></Combo>
                    <CheckRow $ml={19} $mt={2}><Check />Editable data</CheckRow>
                    <Spin><Tri up /><Tri /></Spin>
                  </ViewBody>
                </Panel>
                <Panel $w={208}>
                  <PanelHead>Sensor</PanelHead>
                  <SensorBody>Simulated sensor<br />Adaptive</SensorBody>
                  <OverIcon $r={81} $b={-6} $bg><PlayIc s={22} c1="#a0e070" c2="#60b840" /></OverIcon>
                  <OverIcon $r={-5} $b={-4}><CheckIc /></OverIcon>
                </Panel>
                <Panel $w={122}>
                  <PanelHead>Generator</PanelHead>
                  <GenBody>DVD manual</GenBody>
                  <OverIcon $r={-5} $b={-4}><CheckIc /></OverIcon>
                </Panel>
                <Panel $w={152}>
                  <PanelHead>Parameters</PanelHead>
                  <ParamBody>
                    <CheckRow><Check />Reference</CheckRow>
                    <CheckRow $off><Check $off />XYZ Adjustment</CheckRow>
                  </ParamBody>
                </Panel>
              </Row>
              <Row $h={247} $gap={5} $mt={6}>
                <GridPanel $w={948}>
                  <GridHead>Gray Scale ( Average Gamma: 1.98, Contrast: 36:1 ) ( Average dE: 5.19 [0.00,0.42,5.15] max: 8.24 [CIE76(uv)] ) [Absolute Y w/o gamma]</GridHead>
                  <GridBody>
                    <GridFrame>
                      <Table>
                        <RowHead>% White</RowHead>
                        {HEAD.map(([t, c]) => <ColHead key={t} $bg={c}>{t}</ColHead>)}
                        {ROWS.map((r) => (
                          <React.Fragment key={r.name}>
                            <RowHead>{r.name}</RowHead>
                            {r.vals.map((v, i) => <Cell key={i} $bg={i === 0 && r.first ? r.first : r.bg} $bold={r.bold}>{v}</Cell>)}
                          </React.Fragment>
                        ))}
                      </Table>
                      <VTrack><Arrow d="u" /><Arrow d="d" /></VTrack>
                      <HTrack><Arrow d="l" c="#ccc" /><Arrow d="r" c="#ccc" /></HTrack>
                    </GridFrame>
                  </GridBody>
                </GridPanel>
                <Side>
                  <DisplayPanel $w={88}>
                    <PanelHead $h={21}>Display</PanelHead>
                    <RadioList>
                      <RadioRow $off><Radio $off />Sensor</RadioRow>
                      <RadioRow><Radio />RGB</RadioRow>
                      <RadioRow><Radio />XYZ</RadioRow>
                      <RadioRow><Radio />xyz</RadioRow>
                      <RadioRow><Radio $on />xyY</RadioRow>
                    </RadioList>
                  </DisplayPanel>
                  <SideBtn $mt={10}><Balls list={SMOKE} s={34} /><GoLabel>Go</GoLabel></SideBtn>
                  <SideBtn $mt={5} $pl={5}><TrashIc />Delete</SideBtn>
                </Side>
              </Row>
              <Row $h={615} $gap={3} $mt={6}>
                <Panel $w={369}>
                  <PanelHead $h={20}>Selected color</PanelHead>
                  <SelBody>
                    <LeftCol>
                      <Caption $ml={8} $mt={3}>RGB Levels</Caption>
                      <Dotted />
                      <Levels><Lvl $w={50}>0.0%</Lvl><Lvl $w={50}>0.0%</Lvl><Lvl $w={43}>0.0%</Lvl><Lvl $w={32}>dE</Lvl><Lvl $w={30}>0.0</Lvl></Levels>
                      <Domes width="197" height="10" viewBox="0 0 197 10">
                        <path d="M0 6C10 1 30 0 46 5V7H0z" fill="#a00000" /><path d="M52 6C62 1 82 0 98 5V7H52z" fill="#008000" /><path d="M102 6C112 1 135 0 150 5V7H102z" fill="#000098" /><path d="M154 6C164 1 184 0 197 4V7H154z" fill="#b88000" />
                        <rect y="6" width="197" height="4" fill="#000" />
                      </Domes>
                      <Caption $ml={8} $mt={5} $h={20}>Target</Caption>
                      <Swatch>
                        <SwatchInner>
                          <svg width="79" height="69" viewBox="0 0 80 70">
                            {arcs()}
                            <circle cx="40" cy="35" r="5" fill="none" stroke="#eee" strokeWidth="1.5" />
                            <path d="M40 26v18M31 35h18" stroke="#111" strokeWidth="1.1" strokeDasharray="4 2" />
                          </svg>
                        </SwatchInner>
                      </Swatch>
                    </LeftCol>
                    <RightCol>
                      <Caption $ml={1} $mt={3} $h={23}>Current Measure</Caption>
                      <MeasureFrame>
                        <MeasureTable>
                          {MEASURE.map(([t, g], i) => (
                            <React.Fragment key={i}>
                              <MHead>{t}</MHead>
                              <MCell $g={g} />
                            </React.Fragment>
                          ))}
                        </MeasureTable>
                        <MScroll>
                          <MArrow><Arrow d="u" c="#555" /></MArrow>
                          <MThumb />
                          <Arrow d="d" c="#555" />
                        </MScroll>
                      </MeasureFrame>
                    </RightCol>
                  </SelBody>
                </Panel>
                <Panel $w={657}>
                  <PanelHead $h={20}>Information</PanelHead>
                  <InfoBody>
                    <WhiteCombo $w={272}>CIE Chart<Chev /></WhiteCombo>
                    <ChartFrame><Chart /></ChartFrame>
                  </InfoBody>
                </Panel>
              </Row>
            </Body>
            <TabStrip>
              <NavGroup>
                <NavBtn><svg width="9" height="9"><path d="M1 1l7 7M8 1L1 8" stroke="#111" strokeWidth="1.5" /></svg></NavBtn>
                <NavBtn><svg width="6" height="9"><path d="M5 0v9L0 4.5z" fill="#111" /></svg></NavBtn>
                <NavBtn><svg width="6" height="9"><path d="M0 0v9l5-4.5z" fill="#111" /></svg></NavBtn>
              </NavGroup>
              <Tab $w={134} $ml={0} $active>
                <TabShape width="134" height="28"><path d="M0 0L13 28H121L134 0" fill="#fff" stroke="#222" /></TabShape>
                <TabLabel $pl={17}>Measures</TabLabel>
              </Tab>
              <Tab $w={161} $ml={-7}>
                <TabShape width="161" height="28"><path d="M7 0L0 14L6 28H149L161 0" fill="#ececec" stroke="#444" /></TabShape>
                <TabLabel $pl={14}>CIE Diagram</TabLabel>
              </Tab>
              <TabRight>
                <svg width="14" height="13" viewBox="0 0 14 13"><path d="M0 0h14v9l-3 4H3L0 9z" fill="#8a7a20" /><rect x="4" y="2" width="6" height="4" fill="#e02030" /><rect x="8" y="8" width="4" height="4" fill="#f8e020" /></svg>
                <TabRef><Check />Reference</TabRef>
              </TabRight>
            </TabStrip>
          </ChildInner>
        </Child>
      </Mdi>
      <StatusBar>
        <Ready>Ready</Ready>
        <Pane $w={97} /><Pane $w={33}>CAP</Pane><Pane $w={42} /><Pane $w={52} />
      </StatusBar>
      <Mark>
        <MarkDot>值</MarkDot>
        <MarkText>什么值得买</MarkText>
      </Mark>
    </Page>
  );
}
